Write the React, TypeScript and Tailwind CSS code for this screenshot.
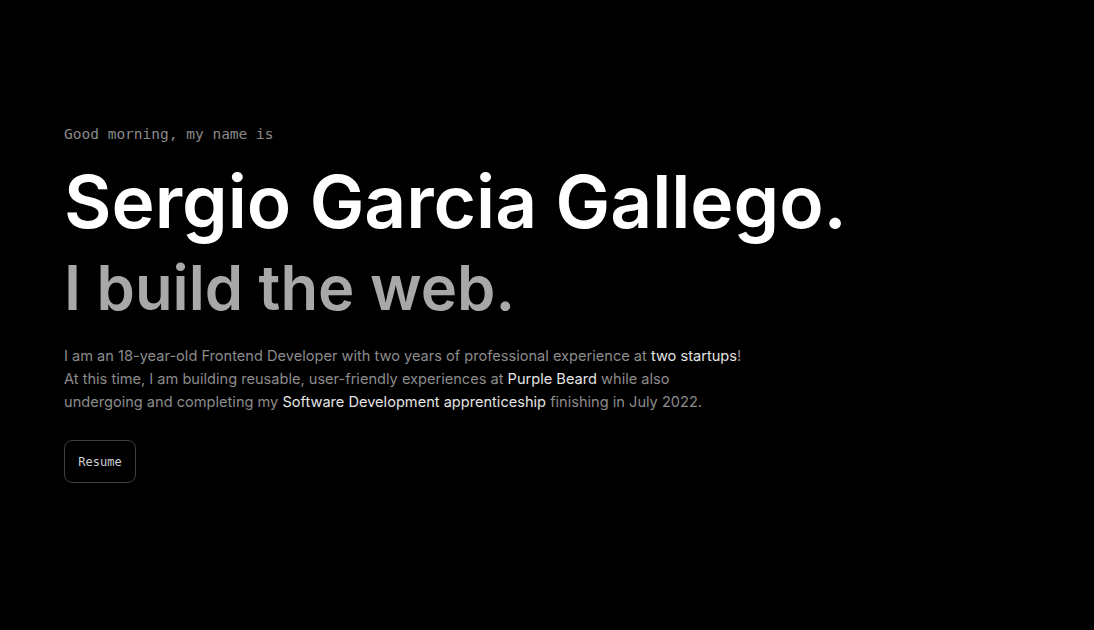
const App = () => {
  return (
    <main className="min-h-screen w-full bg-black font-['Inter',sans-serif]">
      <section className="px-16 pt-[124px]">
        <p className="font-['DejaVu_Sans_Mono',monospace] text-[14.5px] leading-5 text-[#8a8a8a]">
          Good morning, my name is
        </p>
        <h1 className="mt-4 text-[73px] font-semibold leading-[84px] text-white">
          Sergio Garcia Gallego.
        </h1>
        <h2 className="mt-2 text-[61.5px] font-semibold leading-[72px] text-[#a8a8a8]">
          I build the web.
        </h2>
        <p className="mt-[21px] max-w-[720px] text-[14.6px] leading-[23px] text-[#8c8c8c]">
          I am an 18-year-old Frontend Developer with two years of professional
          experience at <span className="text-[#e5e5e5]">two startups</span>!
          <br />
          At this time, I am building reusable, user-friendly experiences at{" "}
          <span className="text-[#e5e5e5]">Purple Beard</span> while also
          <br />
          undergoing and completing my{" "}
          <span className="text-[#e5e5e5]">
            Software Development apprenticeship
          </span>{" "}
          finishing in July 2022.
        </p>
        <button className="mt-[26px] h-[43px] w-[72px] rounded-lg border border-[#3f3f3f] font-['DejaVu_Sans_Mono',monospace] text-xs text-[#cfcfcf]">
          Resume
        </button>
      </section>
    </main>
  );
};

export default App;
